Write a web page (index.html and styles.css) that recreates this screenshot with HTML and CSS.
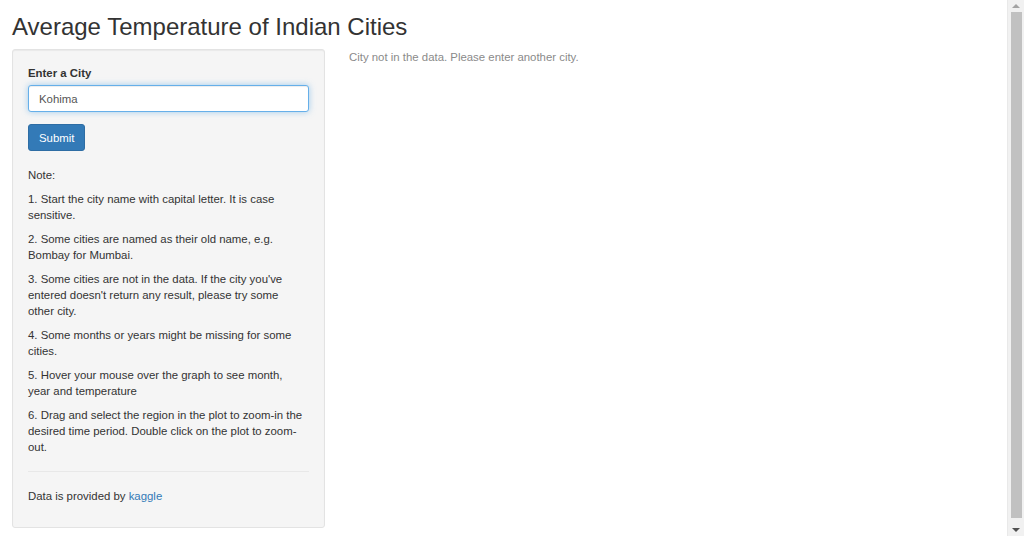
FILE: index.html
```html
<!DOCTYPE html>
<html>
<head>
<meta charset="utf-8">
<title>Average Temperature of Indian Cities</title>
<link rel="stylesheet" href="styles.css">
</head>
<body>
<div class="page">
  <h2 class="title">Average Temperature of Indian Cities</h2>
  <div class="row">
    <div class="side-col">
      <div class="well">
        <div class="form-group">
          <label class="label" for="city">Enter a City</label>
          <input id="city" class="input" type="text" value="Kohima">
        </div>
        <button class="btn" type="button">Submit</button>
        <p class="note first">Note:</p>
        <p class="note">1. Start the city name with capital letter. It is case sensitive.</p>
        <p class="note">2. Some cities are named as their old name, e.g. Bombay for Mumbai.</p>
        <p class="note">3. Some cities are not in the data. If the city you've entered doesn't return any result, please try some other city.</p>
        <p class="note">4. Some months or years might be missing for some cities.</p>
        <p class="note">5. Hover your mouse over the graph to see month, year and temperature</p>
        <p class="note">6. Drag and select the region in the plot to zoom-in the desired time period. Double click on the plot to zoom-out.</p>
        <hr class="rule">
        <p class="note last">Data is provided by <a class="link" href="#">kaggle</a></p>
      </div>
    </div>
    <div class="main-col">
      <div class="message">City not in the data. Please enter another city.</div>
    </div>
  </div>
</div>
<div class="scrollbar" aria-hidden="true">
  <div class="sb-arrow sb-up"></div>
  <div class="sb-track"><div class="sb-thumb"></div></div>
  <div class="sb-arrow sb-down"></div>
</div>
</body>
</html>
```

FILE: styles.css
```css
html, body {
  margin: 0;
  padding: 0;
  background: #ffffff;
}

body {
  font-family: "Liberation Sans", Arial, Helvetica, sans-serif;
  font-size: 11.4px;
  line-height: 16px;
  color: #333333;
}

.page {
  padding: 0 12px;
  margin-right: 17px;
}

.title {
  font-size: 24px;
  font-weight: 400;
  line-height: 28px;
  margin: 13px 0 8px;
  color: #333333;
}

.row {
  display: flex;
  gap: 24px;
}

.side-col {
  width: 313px;
  flex: none;
}

.main-col {
  flex: 1;
}

.well {
  background: #f5f5f5;
  border: 1px solid #e3e3e3;
  border-radius: 3px;
  box-shadow: inset 0 1px 1px rgba(0, 0, 0, 0.05);
  padding: 15px 15px;
  margin-bottom: 8px;
}

.form-group {
  margin-bottom: 12px;
}

.label {
  display: inline-block;
  font-weight: 700;
  margin-bottom: 4px;
}

.input {
  display: block;
  box-sizing: border-box;
  width: 100%;
  height: 27px;
  padding: 0 10px;
  font-family: inherit;
  font-size: 11.4px;
  color: #555555;
  background: #ffffff;
  border: 1px solid #66afe9;
  border-radius: 3px;
  outline: none;
  box-shadow: inset 0 1px 1px rgba(0, 0, 0, 0.075), 0 0 6px rgba(102, 175, 233, 0.6);
  margin: 0;
}

.btn {
  display: block;
  height: 27px;
  padding: 0 10px;
  font-family: inherit;
  font-size: 11.4px;
  color: #ffffff;
  background: #337ab7;
  border: 1px solid #2e6da4;
  border-radius: 3px;
  margin: 0 0 16px;
}

.note {
  margin: 0 5px 8px 0;
}

.rule {
  border: 0;
  border-top: 1px solid #e8e8e8;
  margin: 16px 0;
}

.link {
  color: #337ab7;
  text-decoration: none;
}

.message {
  color: #8a8a8a;
}

.scrollbar {
  position: fixed;
  top: 0;
  right: 0;
  bottom: 0;
  width: 17px;
  background: #f1f1f1;
  border-left: 1px solid #e9e9e9;
  display: flex;
  flex-direction: column;
  box-sizing: border-box;
}

.sb-arrow {
  height: 12px;
  flex: none;
  display: flex;
  align-items: center;
  justify-content: center;
}

.sb-up::before,
.sb-down::before {
  content: "";
  width: 0;
  height: 0;
  border-left: 4px solid transparent;
  border-right: 4px solid transparent;
}

.sb-up::before {
  border-bottom: 4px solid #a3a3a3;
}

.sb-down::before {
  border-top: 4px solid #505050;
}

.sb-track {
  flex: 1;
  padding: 0 2px 0 3px;
  display: flex;
}

.sb-thumb {
  flex: 1;
  background: #c1c1c1;
  margin: 0 0 6px;
}
```
